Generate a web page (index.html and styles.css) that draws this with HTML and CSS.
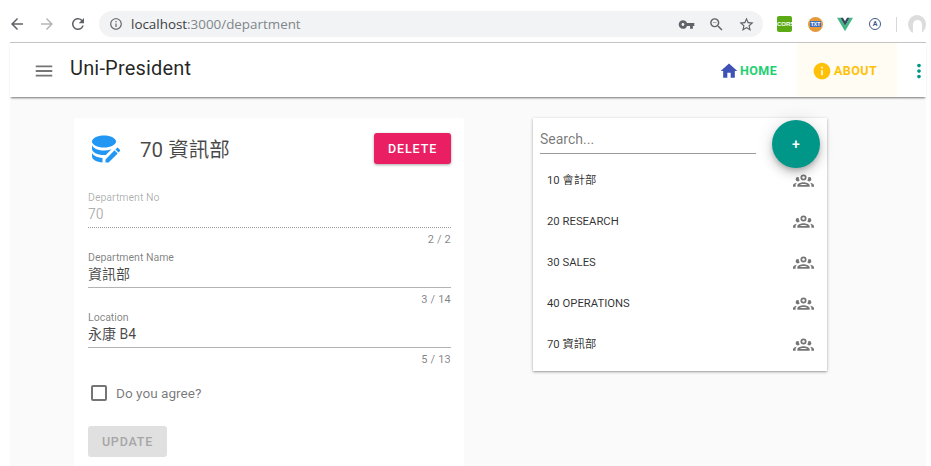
FILE: index.html
```html
<!DOCTYPE html>
<html lang="zh-Hant">
<head>
<meta charset="utf-8">
<title>Uni-President</title>
<link rel="stylesheet" href="styles.css">
</head>
<body>
<div class="browser">
  <svg class="tb-icon nav-back" viewBox="0 0 24 24"><path d="M20 11H7.83l5.59-5.59L12 4l-8 8 8 8 1.41-1.41L7.83 13H20v-2z"/></svg>
  <svg class="tb-icon nav-fwd" viewBox="0 0 24 24"><path d="M12 4l-1.41 1.41L16.17 11H4v2h12.17l-5.58 5.59L12 20l8-8z"/></svg>
  <svg class="tb-icon nav-reload" viewBox="0 0 24 24"><path d="M17.65 6.35A7.958 7.958 0 0 0 12 4c-4.42 0-7.99 3.58-7.99 8s3.57 8 7.99 8c3.73 0 6.84-2.55 7.73-6h-2.08A5.99 5.99 0 0 1 12 18c-3.31 0-6-2.69-6-6s2.69-6 6-6c1.66 0 3.14.69 4.22 1.78L13 11h7V4l-2.35 2.35z"/></svg>
  <div class="omnibox">
    <svg class="omni-info" viewBox="0 0 24 24"><path d="M11 7h2v2h-2zm0 4h2v6h-2zm1-9C6.48 2 2 6.48 2 12s4.48 10 10 10 10-4.48 10-10S17.52 2 12 2zm0 18c-4.41 0-8-3.59-8-8s3.59-8 8-8 8 3.59 8 8-3.59 8-8 8z"/></svg>
    <span class="url"><span class="url-host">localhost</span>:3000/department</span>
    <svg class="omni-icon" viewBox="0 0 24 24"><path d="M12.65 10A5.99 5.99 0 0 0 7 6c-3.31 0-6 2.69-6 6s2.69 6 6 6a5.99 5.99 0 0 0 5.65-4H17v4h4v-4h2v-4H12.65zM7 14c-1.1 0-2-.9-2-2s.9-2 2-2 2 .9 2 2-.9 2-2 2z"/></svg>
    <svg class="omni-icon" viewBox="0 0 24 24"><path d="M15.5 14h-.79l-.28-.27A6.47 6.47 0 0 0 16 9.5 6.5 6.5 0 1 0 9.5 16c1.61 0 3.09-.59 4.23-1.57l.27.28v.79l5 4.99L20.49 19l-4.99-5zm-6 0C7.01 14 5 11.99 5 9.5S7.01 5 9.5 5 14 7.01 14 9.5 11.99 14 9.5 14zM7 9h5v1H7z"/></svg>
    <svg class="omni-icon" viewBox="0 0 24 24"><path d="M22 9.24l-7.19-.62L12 2 9.19 8.63 2 9.24l5.46 4.73L5.82 21 12 17.27 18.18 21l-1.63-7.03L22 9.24zM12 15.4l-3.76 2.27 1-4.28-3.32-2.88 4.38-.38L12 6.1l1.71 4.04 4.38.38-3.32 2.88 1 4.28L12 15.4z"/></svg>
  </div>
  <div class="extensions">
    <span class="ext-cors">CORS</span>
    <span class="ext-cookie"><span class="ext-txt">TXT</span></span>
    <svg class="ext-vue" viewBox="0 0 24 22"><path fill="#41b883" d="M0 1h5l7 12L19 1h5L12 21z"/><path fill="#34495e" d="M5 1h4l3 5 3-5h4l-7 12z"/></svg>
    <span class="ext-a">A</span>
    <span class="ext-sep"></span>
    <span class="ext-avatar"><span class="ext-avatar-in"></span></span>
  </div>
</div>

<div class="app">
  <header class="appbar">
    <svg class="menu-icon" viewBox="0 0 24 24"><path d="M3 18h18v-2H3v2zm0-5h18v-2H3v2zm0-7v2h18V6H3z"/></svg>
    <div class="app-title">Uni-President</div>
    <nav class="nav">
      <a class="nav-item nav-home">
        <svg class="nav-icon icon-home" viewBox="0 0 24 24"><path d="M10 20v-6h4v6h5v-8h3L12 3 2 12h3v8z"/></svg>
        <span>HOME</span>
      </a>
      <a class="nav-item nav-about">
        <svg class="nav-icon icon-about" viewBox="0 0 24 24"><path d="M12 2C6.48 2 2 6.48 2 12s4.48 10 10 10 10-4.48 10-10S17.52 2 12 2zm1 15h-2v-6h2v6zm0-8h-2V7h2v2z"/></svg>
        <span>ABOUT</span>
      </a>
      <svg class="kebab" viewBox="0 0 24 24"><path d="M12 8c1.1 0 2-.9 2-2s-.9-2-2-2-2 .9-2 2 .9 2 2 2zm0 2c-1.1 0-2 .9-2 2s.9 2 2 2 2-.9 2-2-.9-2-2-2zm0 6c-1.1 0-2 .9-2 2s.9 2 2 2 2-.9 2-2-.9-2-2-2z"/></svg>
    </nav>
  </header>

  <main class="content">
    <section class="card form-card">
      <div class="form-head">
        <svg class="db-icon" viewBox="0 0 24 24"><path d="M4,14V17C4,19 7.05,20.72 11,21V18.11L11.13,18C7.12,17.76 4,16.06 4,14M12,13C7.58,13 4,11.21 4,9V12C4,14.21 7.58,16 12,16C12.39,16 12.77,16 13.16,16L17,12.12C15.4,12.72 13.71,13 12,13M12,3C7.58,3 4,4.79 4,7C4,9.21 7.58,11 12,11C16.42,11 20,9.21 20,7C20,4.79 16.42,3 12,3M21,11.13C20.85,11.13 20.71,11.19 20.6,11.3L19.6,12.3L21.65,14.35L22.65,13.35C22.86,13.14 22.86,12.79 22.65,12.58L21.4,11.3C21.29,11.19 21.15,11.13 21,11.13M19.03,12.88L13,18.94V21H15.06L21.12,14.93L19.03,12.88Z"/></svg>
        <h1 class="form-title">70 資訊部</h1>
        <button class="btn-delete">DELETE</button>
      </div>

      <div class="field field-disabled">
        <div class="field-label">Department No</div>
        <div class="field-value">70</div>
        <div class="field-counter">2 / 2</div>
      </div>
      <div class="field">
        <div class="field-label">Department Name</div>
        <div class="field-value">資訊部</div>
        <div class="field-counter">3 / 14</div>
      </div>
      <div class="field">
        <div class="field-label">Location</div>
        <div class="field-value">永康 B4</div>
        <div class="field-counter">5 / 13</div>
      </div>

      <label class="agree"><span class="checkbox"></span><span>Do you agree?</span></label>
      <button class="btn-update">UPDATE</button>
    </section>

    <section class="card list-card">
      <div class="search">Search...</div>
      <button class="fab">+</button>
      <ul class="dept-list">
        <li class="dept"><span>10 會計部</span><svg class="dept-icon" viewBox="0 0 24 24"><use href="#people"/></svg></li>
        <li class="dept"><span>20 RESEARCH</span><svg class="dept-icon" viewBox="0 0 24 24"><use href="#people"/></svg></li>
        <li class="dept"><span>30 SALES</span><svg class="dept-icon" viewBox="0 0 24 24"><use href="#people"/></svg></li>
        <li class="dept"><span>40 OPERATIONS</span><svg class="dept-icon" viewBox="0 0 24 24"><use href="#people"/></svg></li>
        <li class="dept"><span>70 資訊部</span><svg class="dept-icon" viewBox="0 0 24 24"><use href="#people"/></svg></li>
      </ul>
    </section>
  </main>
</div>

<svg class="defs" width="0" height="0"><defs><path id="people" d="M12,5A3.5,3.5 0 0,0 8.5,8.5A3.5,3.5 0 0,0 12,12A3.5,3.5 0 0,0 15.5,8.5A3.5,3.5 0 0,0 12,5M12,7A1.5,1.5 0 0,1 13.5,8.5A1.5,1.5 0 0,1 12,10A1.5,1.5 0 0,1 10.5,8.5A1.5,1.5 0 0,1 12,7M5.5,8A2.5,2.5 0 0,0 3,10.5C3,11.44 3.53,12.25 4.29,12.68C4.65,12.88 5.06,13 5.5,13C5.94,13 6.35,12.88 6.71,12.68C7.08,12.47 7.39,12.17 7.62,11.81C6.89,10.86 6.5,9.7 6.5,8.5C6.5,8.41 6.5,8.31 6.5,8.22C6.2,8.08 5.86,8 5.5,8M18.5,8C18.14,8 17.8,8.08 17.5,8.22C17.5,8.31 17.5,8.41 17.5,8.5C17.5,9.7 17.11,10.86 16.38,11.81C16.5,12 16.63,12.15 16.78,12.3C16.94,12.45 17.1,12.58 17.29,12.68C17.65,12.88 18.06,13 18.5,13C18.94,13 19.35,12.88 19.71,12.68C20.47,12.25 21,11.44 21,10.5A2.5,2.5 0 0,0 18.5,8M12,14C9.66,14 5,15.17 5,17.5V19H19V17.5C19,15.17 14.34,14 12,14M4.71,14.55C2.78,14.78 0,15.76 0,17.5V19H3V17.07C3,16.06 3.69,15.22 4.71,14.55M19.29,14.55C20.31,15.22 21,16.06 21,17.07V19H24V17.5C24,15.76 21.22,14.78 19.29,14.55M12,16C13.53,16 15.24,16.5 16.23,17H7.77C8.76,16.5 10.47,16 12,16Z"/></defs></svg>
</body>
</html>
```

FILE: styles.css
```css
* { box-sizing: border-box; }
html, body { margin: 0; padding: 0; height: 100%; }
body {
  width: 931px;
  height: 466px;
  overflow: hidden;
  background: #fff;
  font-family: Roboto, "Noto Sans CJK TC", sans-serif;
  color: rgba(0,0,0,.87);
  position: relative;
}
.defs { position: absolute; }

/* browser chrome */
.browser {
  height: 43px;
  width: 926px;
  display: flex;
  align-items: center;
  padding: 5px 0 0 8px;
  position: relative;
}
.browser::after {
  content: "";
  position: absolute;
  left: 10px;
  right: 0;
  bottom: 0;
  height: 1px;
  background: #c4c4c4;
}
.tb-icon { width: 18px; height: 18px; fill: #5f6368; flex: none; }
.nav-fwd { margin-left: 12px; fill: #b4b7ba; }
.nav-reload { margin-left: 13px; }
.omnibox {
  margin-left: 12px;
  width: 664px;
  height: 26px;
  border-radius: 13px;
  background: #f1f3f4;
  display: flex;
  align-items: center;
  padding: 0 8px 0 10px;
  flex: none;
}
.omni-info { width: 14px; height: 14px; fill: #5f6368; flex: none; }
.url {
  margin-left: 8px;
  font-family: "Open Sans", sans-serif;
  font-size: 13.4px;
  color: #80868b;
  flex: 1;
  white-space: nowrap;
}
.url-host { color: #3c4043; }
.omni-icon { width: 17px; height: 17px; fill: #5f6368; flex: none; margin-left: 13px; }
.extensions { display: flex; align-items: center; flex: 1; padding-left: 14px; }
.ext-cors {
  width: 15px; height: 16px;
  background: #5cab14;
  border-radius: 2px;
  color: #fff;
  font: 700 6px/16px "Liberation Sans Narrow", "Liberation Sans", sans-serif;
  text-align: center;
  flex: none;
}
.ext-cookie {
  margin-left: 16px;
  width: 15px; height: 15px;
  border-radius: 50%;
  background: #e49a3a;
  display: flex; align-items: center; justify-content: center;
  flex: none;
}
.ext-txt {
  background: #3f6fc4;
  color: #fff;
  font: 700 5px/6px "Liberation Sans", sans-serif;
  padding: 0 1px;
}
.ext-vue { margin-left: 14px; width: 16px; height: 15px; flex: none; }
.ext-a {
  margin-left: 16px;
  width: 12px; height: 12px;
  border: 1px solid #3d5a8a;
  border-radius: 50%;
  color: #3d5a8a;
  font: 700 7px/10px Roboto, sans-serif;
  text-align: center;
  flex: none;
}
.ext-sep { margin-left: 15px; width: 1px; height: 15px; background: #d8d8d8; flex: none; }
.ext-avatar {
  margin-left: 11px;
  width: 18px; height: 19px;
  border-radius: 50%;
  background: #dcdcdc;
  display: flex; justify-content: center; align-items: flex-end;
  flex: none;
}
.ext-avatar-in { width: 9px; height: 14px; background: #fff; border-radius: 5px 5px 0 0; }

/* app */
.app {
  margin-left: 10px;
  width: 916px;
  height: 423px;
  background: #fafafa;
  display: flex;
  flex-direction: column;
}
.appbar {
  height: 54px;
  background: #fff;
  display: flex;
  align-items: center;
  padding-left: 23px;
  flex: none;
  box-shadow: 0 2px 2px -1px rgba(0,0,0,.55);
  position: relative;
  z-index: 2;
}
.menu-icon { width: 22px; height: 22px; fill: #757575; flex: none; margin-top: 2px; }
.app-title { margin-left: 15px; font-size: 20px; line-height: 24px; margin-top: -5px; letter-spacing: .18px; }
.nav { margin-left: auto; display: flex; align-items: center; height: 100%; }
.nav-item {
  display: flex;
  align-items: center;
  height: 100%;
  font-size: 12.5px;
  font-weight: 700;
  letter-spacing: .45px;
}
.nav-home { color: #1ed071; width: 78px; padding-top: 1px; }
.nav-about { color: #ffc107; background: #fffcf4; width: 100px; padding: 1px 0 0 15px; }
.nav-icon { width: 20px; height: 20px; flex: none; margin-right: 1px; }
.icon-about + span { margin-left: 1px; }
.icon-home { fill: #3f51b5; }
.icon-about { fill: #ffc107; }
.kebab { width: 22px; height: 22px; fill: #009688; margin: 2px -4px 0 11px; flex: none; }

.content {
  flex: 1;
  min-height: 0;
  display: flex;
  align-items: flex-start;
  padding: 21px 0 0 64px;
}
.card { background: #fff; flex: none; }
.form-card {
  width: 390px;
  height: 360px;
  border-radius: 3px;
  padding: 15px 13px 0 14px;
}
.form-head { display: flex; align-items: center; height: 31px; }
.db-icon { width: 36px; height: 36px; fill: #2196f3; flex: none; margin-left: -2px; }
.form-title {
  margin: -2px 0 0 18px;
  font-size: 20.5px;
  font-weight: 400;
  flex: 1;
  color: rgba(0,0,0,.72);
}
.btn-delete {
  width: 77px;
  height: 31px;
  border: 0;
  border-radius: 3px;
  background: #e91e63;
  color: #fff;
  font: 500 12.5px Roboto, sans-serif;
  letter-spacing: .9px;
  box-shadow: 0 1px 3px rgba(0,0,0,.35);
  padding: 0;
}
.field { font-size: 14px; }
.form-head + .field { margin-top: 27px; }
.field + .field { margin-top: 3px; }
.field-label { font-size: 10.5px; line-height: 14px; color: rgba(0,0,0,.5); }
.field-value {
  height: 23px;
  line-height: 18px;
  font-size: 14px;
  border-bottom: 1px solid #b3b3b3;
  color: rgba(0,0,0,.72);
}
.field-counter { font-size: 11px; line-height: 13px; padding-top: 5px; height: 20px; text-align: right; color: rgba(0,0,0,.5); letter-spacing: .2px; }
.field-disabled .field-label { color: rgba(0,0,0,.32); }
.field-disabled .field-value { color: rgba(0,0,0,.32); border-bottom: 1px dotted #9a9a9a; }
.agree {
  margin-top: 17px;
  display: flex;
  align-items: center;
  font-size: 13.6px;
  color: rgba(0,0,0,.54);
  padding-left: 3px;
  height: 16px;
}
.checkbox {
  width: 16px; height: 16px;
  border: 2px solid #757575;
  border-radius: 2px;
  margin-right: 9px;
  flex: none;
}
.btn-update {
  display: block;
  margin-top: 25px;
  width: 79px;
  height: 31px;
  border: 0;
  border-radius: 3px;
  background: #e0e0e0;
  color: #a6a6a6;
  font: 500 12.5px Roboto, sans-serif;
  letter-spacing: .8px;
  padding: 0;
}

.list-card {
  margin-left: 69px;
  width: 294px;
  height: 253px;
  position: relative;
  padding: 11px 7px 0;
  box-shadow: 0 1px 3px rgba(0,0,0,.3), 0 1px 1px rgba(0,0,0,.1);
}
.search {
  width: 216px;
  height: 25px;
  font-size: 14px;
  line-height: 20px;
  color: rgba(0,0,0,.54);
  border-bottom: 1px solid #9a9a9a;
}
.fab {
  position: absolute;
  top: 2px;
  right: 7px;
  width: 48px;
  height: 48px;
  border: 0;
  border-radius: 50%;
  background: #009688;
  color: #fff;
  font: 500 14px Roboto, sans-serif;
  padding: 0;
  box-shadow: 0 3px 5px -1px rgba(0,0,0,.2), 0 6px 10px 0 rgba(0,0,0,.14), 0 1px 18px 0 rgba(0,0,0,.12);
}
.dept-list { list-style: none; margin: 6px 0 0; padding: 0; }
.dept {
  height: 41px;
  display: flex;
  align-items: center;
  justify-content: space-between;
  padding: 0 6px 0 7px;
  font-size: 11.3px;
  line-height: 16px;
  color: rgba(0,0,0,.82);
}
.dept-icon { width: 21px; height: 21px; fill: #757575; flex: none; }
```
